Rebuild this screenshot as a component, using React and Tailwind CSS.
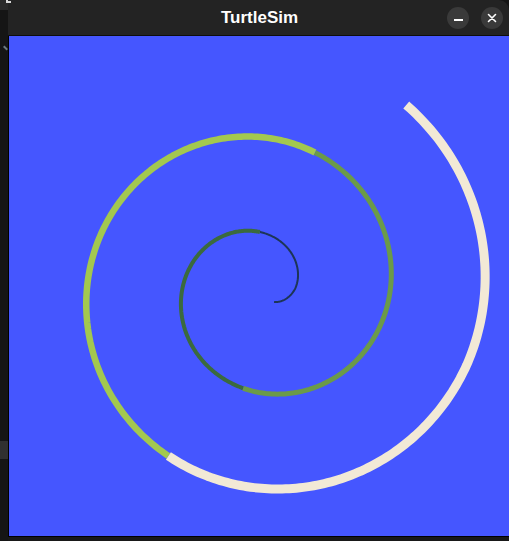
import React from "react";

const CX = 253.5;
const CY = 253;

function pt(phi) {
  let r = phi >= 0 ? 32.5 + 0.265 * phi : 32.5 + 0.31 * phi;
  if (phi > 700) r -= (phi - 700) * 0.05;
  const t = (phi * Math.PI) / 180;
  return [CX + r * Math.cos(t), CY - r * Math.sin(t)];
}

function pathFor(a, b) {
  const pts = [];
  for (let p = a; p < b; p += 1) pts.push(pt(p));
  pts.push(pt(b));
  return pts.map((q, i) => `${i ? "L" : "M"}${q[0].toFixed(2)} ${q[1].toFixed(2)}`).join(" ");
}

const SEGMENTS = [
  { a: -48.5, b: 92.6, color: "#1d3557", w: 2 },
  { a: 92.6, b: 259, color: "#3b6a3e", w: 4 },
  { a: 259, b: 429, color: "#6b9a49", w: 5 },
  { a: 429, b: 600.6, color: "#a3c84f", w: 6.5 },
  { a: 600.6, b: 772, color: "#f2e9d6", w: 9 },
];

function Spiral() {
  return (
    <svg width="500" height="500" viewBox="0 0 500 500" className="block">
      {SEGMENTS.map((s, i) => (
        <path
          key={i}
          d={pathFor(s.a, s.b)}
          fill="none"
          stroke={s.color}
          strokeWidth={s.w}
          strokeLinecap="butt"
          strokeLinejoin="round"
        />
      ))}
    </svg>
  );
}

export default function App() {
  return (
    <div className="w-[509px] h-[541px] flex bg-[#151515] overflow-hidden" style={{ fontFamily: '"Liberation Sans", Arial, sans-serif' }}>
      <div className="w-[8px] flex flex-col shrink-0">
        <div className="h-[10px] bg-[#2a2a2a] relative z-10">
          <div className="ml-[6px] w-[5px] h-[3px] border-l-2 border-b-2 border-[#d8d8d8]" />
        </div>
        <div className="mt-[37px] ml-[3px] w-[5px] h-[2px] bg-[#6a7a80] rotate-45" />
        <div className="mt-[392px] h-[18px] bg-[#303030]" />
      </div>
      <div className="w-[501px] flex flex-col">
        <div className="h-[35px] bg-[#232323] rounded-tr-[10px] flex items-center relative">
          <div className="flex-1 text-center text-white font-bold text-[17px] pl-[2px] pt-[1px]">TurtleSim</div>
          <div className="absolute right-[6px] top-[7px] flex gap-[12px]">
            <div className="w-[22px] h-[22px] rounded-full bg-[#3a3a3a] flex items-center justify-center">
              <div className="w-[9px] h-[2px] bg-white mt-[3px]" />
            </div>
            <div className="w-[22px] h-[22px] rounded-full bg-[#3a3a3a] flex items-center justify-center">
              <svg width="10" height="10" viewBox="0 0 10 10">
                <path d="M1.5 1.5 L8.5 8.5 M8.5 1.5 L1.5 8.5" stroke="white" strokeWidth="1.6" strokeLinecap="round" />
              </svg>
            </div>
          </div>
        </div>
        <div className="h-[1px] bg-[#0e0e0e]" />
        <div className="flex">
          <div className="w-[1px] bg-black" />
          <div className="w-[500px] h-[500px] bg-[#4556ff]">
            <Spiral />
          </div>
        </div>
        <div className="h-[1px] bg-black" />
        <div className="flex-1 bg-[#181818]" />
      </div>
    </div>
  );
}
